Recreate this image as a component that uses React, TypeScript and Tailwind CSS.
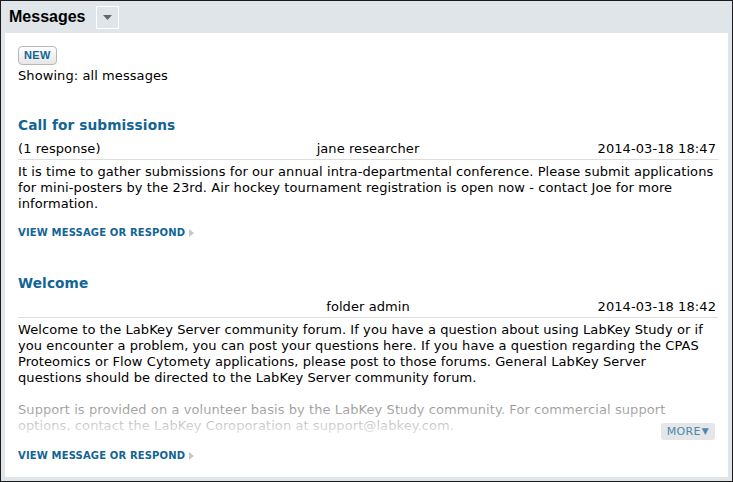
import {ReactNode} from "react";

const verdana = { fontFamily: '"DejaVu Sans", Verdana, sans-serif' };
const arial = { fontFamily: '"Liberation Sans", Arial, sans-serif' };

function Arrow() {
    return (
        <svg width="5" height="8" viewBox="0 0 5 8" className="ml-[4px] inline-block">
            <path d="M0 0 L5 4 L0 8 Z" fill="#c8c8c8" />
        </svg>
    );
}

function ViewLink() {
    return (
        <div className="flex items-center text-[10px] font-bold text-[#126495] tracking-[0.15px]" style={verdana}>
            VIEW MESSAGE OR RESPOND<Arrow />
        </div>
    );
}

function MessageHeader({response, author, date}: { response?: string; author: string; date: string }) {
    return (
        <div className="grid grid-cols-[1fr_auto_1fr] items-center h-[20px] border-b border-[#dddddd] pb-[2px] text-black">
            <span>{response}</span>
            <span className="text-center">{author}</span>
            <span className="text-right pr-[2px]">{date}</span>
        </div>
    );
}

function Message({title, children}: { title: string; children: ReactNode }) {
    return (
        <div className="flex flex-col">
            <h3 className="text-[13.7px] font-bold text-[#126495] leading-[20px] mb-[5px] tracking-[0.1px]">{title}</h3>
            {children}
        </div>
    );
}

export default function App() {
    return (
        <div className="w-[733px] h-[482px] bg-[#1b1b1b] p-[1px]" style={verdana}>
            <div className="w-full h-full bg-[#e0e5e9] flex flex-col px-[4px] pb-[4px]">
                <div className="h-[32px] flex items-center pl-[4px] shrink-0">
                    <span className="text-[16px] font-bold text-black" style={arial}>Messages</span>
                    <div className="ml-[10px] w-[23px] h-[23px] border border-white flex items-center justify-center">
                        <svg width="9" height="5" viewBox="0 0 9 5">
                            <path d="M0 0 L9 0 L4.5 5 Z" fill="#666" />
                        </svg>
                    </div>
                </div>
                <div className="flex-1 bg-white pl-[13px] pr-[10px] pt-[13px] text-[13px] leading-[16px] tracking-[0.08px] text-black">
                    <button className="h-[19px] px-[5px] rounded-[4px] border border-[#b8b8b8] bg-gradient-to-b from-white to-[#e6e6e6] text-[11px] font-bold text-[#126495] leading-none tracking-[0.3px]" style={arial}>NEW</button>
                    <div className="mt-[3px]">Showing: all messages</div>

                    <div className="mt-[31px]">
                        <Message title="Call for submissions">
                            <MessageHeader response="(1 response)" author="jane researcher" date="2014-03-18 18:47" />
                            <p className="mt-[4px] pr-[3px]">It is time to gather submissions for our annual intra-departmental conference. Please submit applications for mini-posters by the 23rd. Air hockey tournament registration is open now - contact Joe for more information.</p>
                            <div className="mt-[13px]"><ViewLink /></div>
                        </Message>
                    </div>

                    <div className="mt-[32px]">
                        <Message title="Welcome">
                            <MessageHeader author="folder admin" date="2014-03-18 18:42" />
                            <div className="relative mt-[4px]">
                                <div className="h-[113px] overflow-hidden pr-[8px]">
                                    <p>Welcome to the LabKey Server community forum. If you have a question about using LabKey Study or if you encounter a problem, you can post your questions here. If you have a question regarding the CPAS Proteomics or Flow Cytomety applications, please post to those forums. General LabKey Server questions should be directed to the LabKey Server community forum.</p>
                                    <p className="mt-[16px]">Support is provided on a volunteer basis by the LabKey Study community. For commercial support options, contact the LabKey Coroporation at support@labkey.com.</p>
                                </div>
                                <div className="absolute left-0 right-0 bottom-0 h-[46px] bg-gradient-to-b from-white/40 to-white/90" />
                                <button className="absolute right-[3px] bottom-[-5px] h-[17px] px-[6px] rounded-[3px] bg-[#e4e6e8] text-[11px] text-[#4f86ad] leading-none flex items-center tracking-[0.3px]">MORE<span className="text-[9px] ml-[1px]">▼</span></button>
                            </div>
                            <div className="mt-[13px]"><ViewLink /></div>
                        </Message>
                    </div>
                </div>
            </div>
        </div>
    );
}
